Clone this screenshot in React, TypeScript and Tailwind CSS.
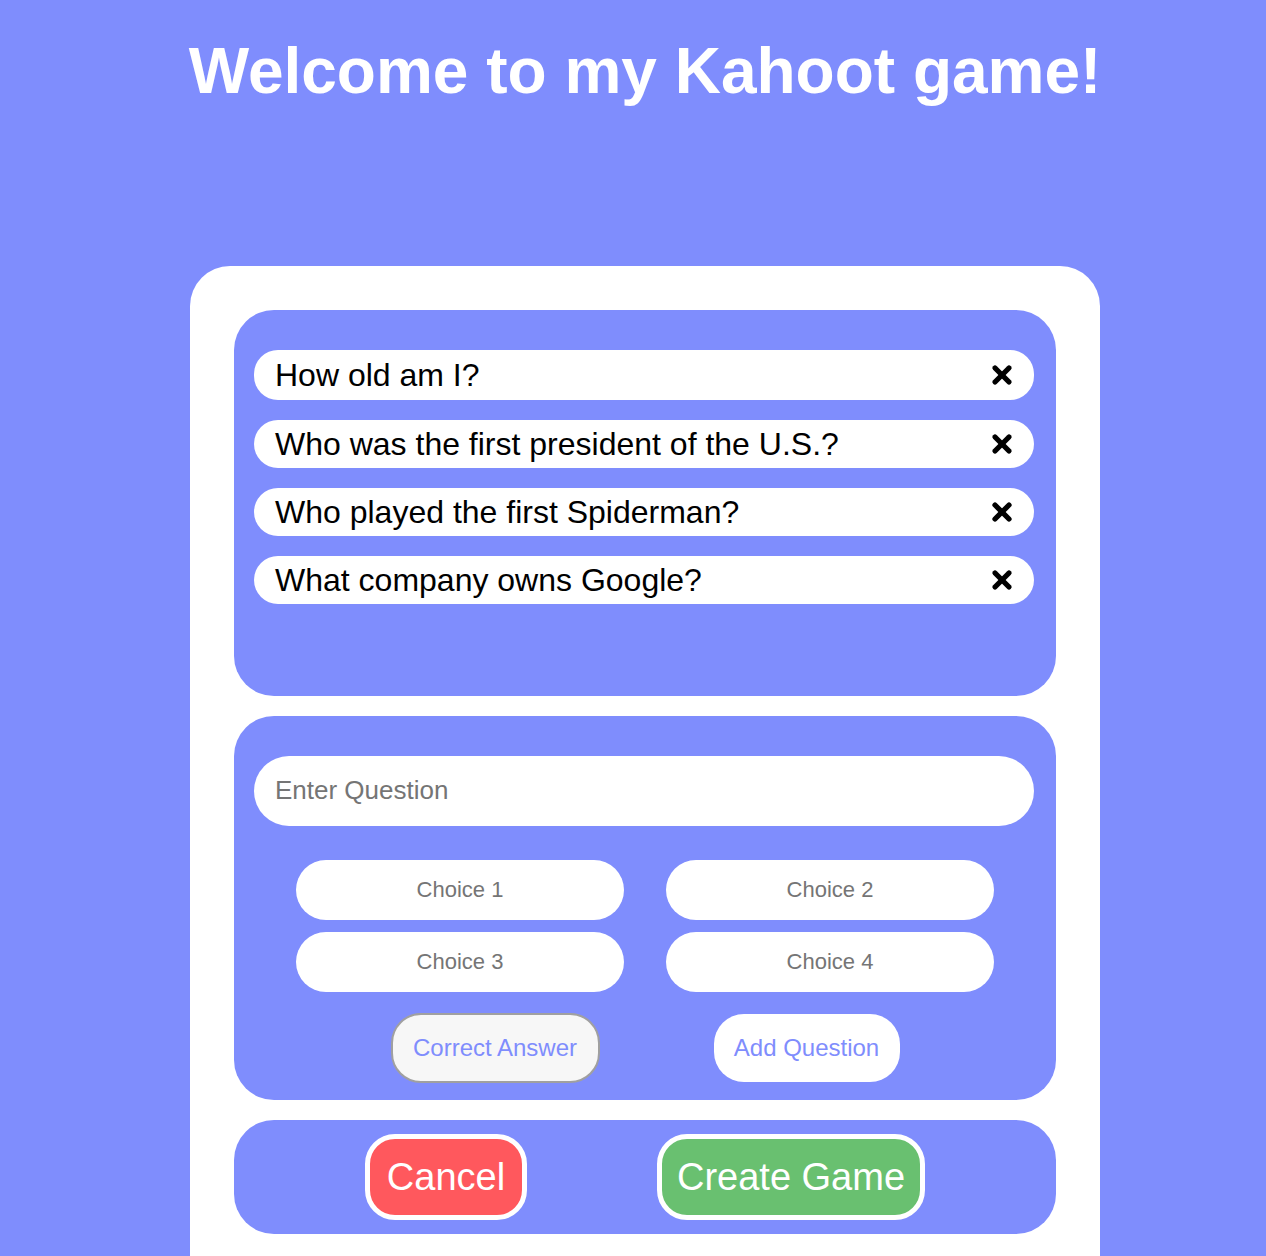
import { X } from "lucide-react";

const questions = [
  "How old am I?",
  "Who was the first president of the U.S.?",
  "Who played the first Spiderman?",
  "What company owns Google?",
];

const QuestionRow = ({ text, tall }: { text: string; tall?: boolean }) => (
  <div
    className={`flex items-center justify-between rounded-[24px] bg-white pl-[21px] pr-[18px] ${
      tall ? "h-[50px]" : "h-[48px]"
    }`}
  >
    <span className="text-[32px] leading-none text-black">{text}</span>
    <X className="h-[28px] w-[28px] text-black" strokeWidth={4.5} />
  </div>
);

const Choice = ({ label }: { label: string }) => (
  <input
    className="h-[60px] w-[328px] rounded-[30px] bg-white text-center text-[22px] text-black outline-none placeholder:text-[#757575]"
    placeholder={label}
  />
);

export default function App() {
  return (
    <div
      className="h-[1256px] overflow-hidden bg-[#7f8dfd] pl-[24px]"
      style={{ fontFamily: '"Liberation Sans", Arial, sans-serif' }}
    >
      <div className="mx-auto flex w-[910px] flex-col items-center">
        <h1 className="mt-[35px] whitespace-nowrap text-[64px] font-bold leading-[1.15] text-white">
          Welcome to my Kahoot game!
        </h1>
        <div className="mt-[157px] flex w-full flex-col gap-[20px] rounded-t-[40px] bg-white px-[44px] pb-[40px] pt-[44px]">
          <div className="flex h-[386px] flex-col gap-[20px] rounded-[40px] bg-[#7f8dfd] pl-[20px] pr-[22px] pt-[40px]">
            {questions.map((q, i) => (
              <QuestionRow key={q} text={q} tall={i === 0} />
            ))}
          </div>
          <div className="flex flex-col items-center rounded-[40px] bg-[#7f8dfd] pb-[17px] pl-[20px] pr-[22px] pt-[40px]">
            <input
              className="h-[70px] w-full rounded-[35px] bg-white px-[21px] text-[26px] text-black outline-none placeholder:text-[#757575]"
              placeholder="Enter Question"
            />
            <div className="ml-[2px] mt-[34px] grid grid-cols-2 gap-x-[42px] gap-y-[12px]">
              <Choice label="Choice 1" />
              <Choice label="Choice 2" />
              <Choice label="Choice 3" />
              <Choice label="Choice 4" />
            </div>
            <div className="ml-[2px] mt-[21px] flex items-center gap-[114px]">
              <button className="h-[70px] w-[209px] rounded-[30px] border-2 border-[#a0a0a0] bg-[#f7f7f7] text-[24px] text-[#7f8dfd]">
                Correct Answer
              </button>
              <button className="h-[68px] w-[186px] rounded-[30px] bg-white text-[24px] text-[#7f8dfd]">
                Add Question
              </button>
            </div>
          </div>
          <div className="flex h-[114px] items-center justify-center gap-[130px] rounded-[40px] bg-[#7f8dfd]">
            <button className="h-[86px] w-[162px] rounded-[30px] border-[5px] border-white bg-[#ff585d] text-[38px] leading-none text-white">
              Cancel
            </button>
            <button className="h-[86px] w-[268px] rounded-[30px] border-[5px] border-white bg-[#69c070] text-[38px] leading-none text-white">
              Create Game
            </button>
          </div>
        </div>
      </div>
    </div>
  );
}
